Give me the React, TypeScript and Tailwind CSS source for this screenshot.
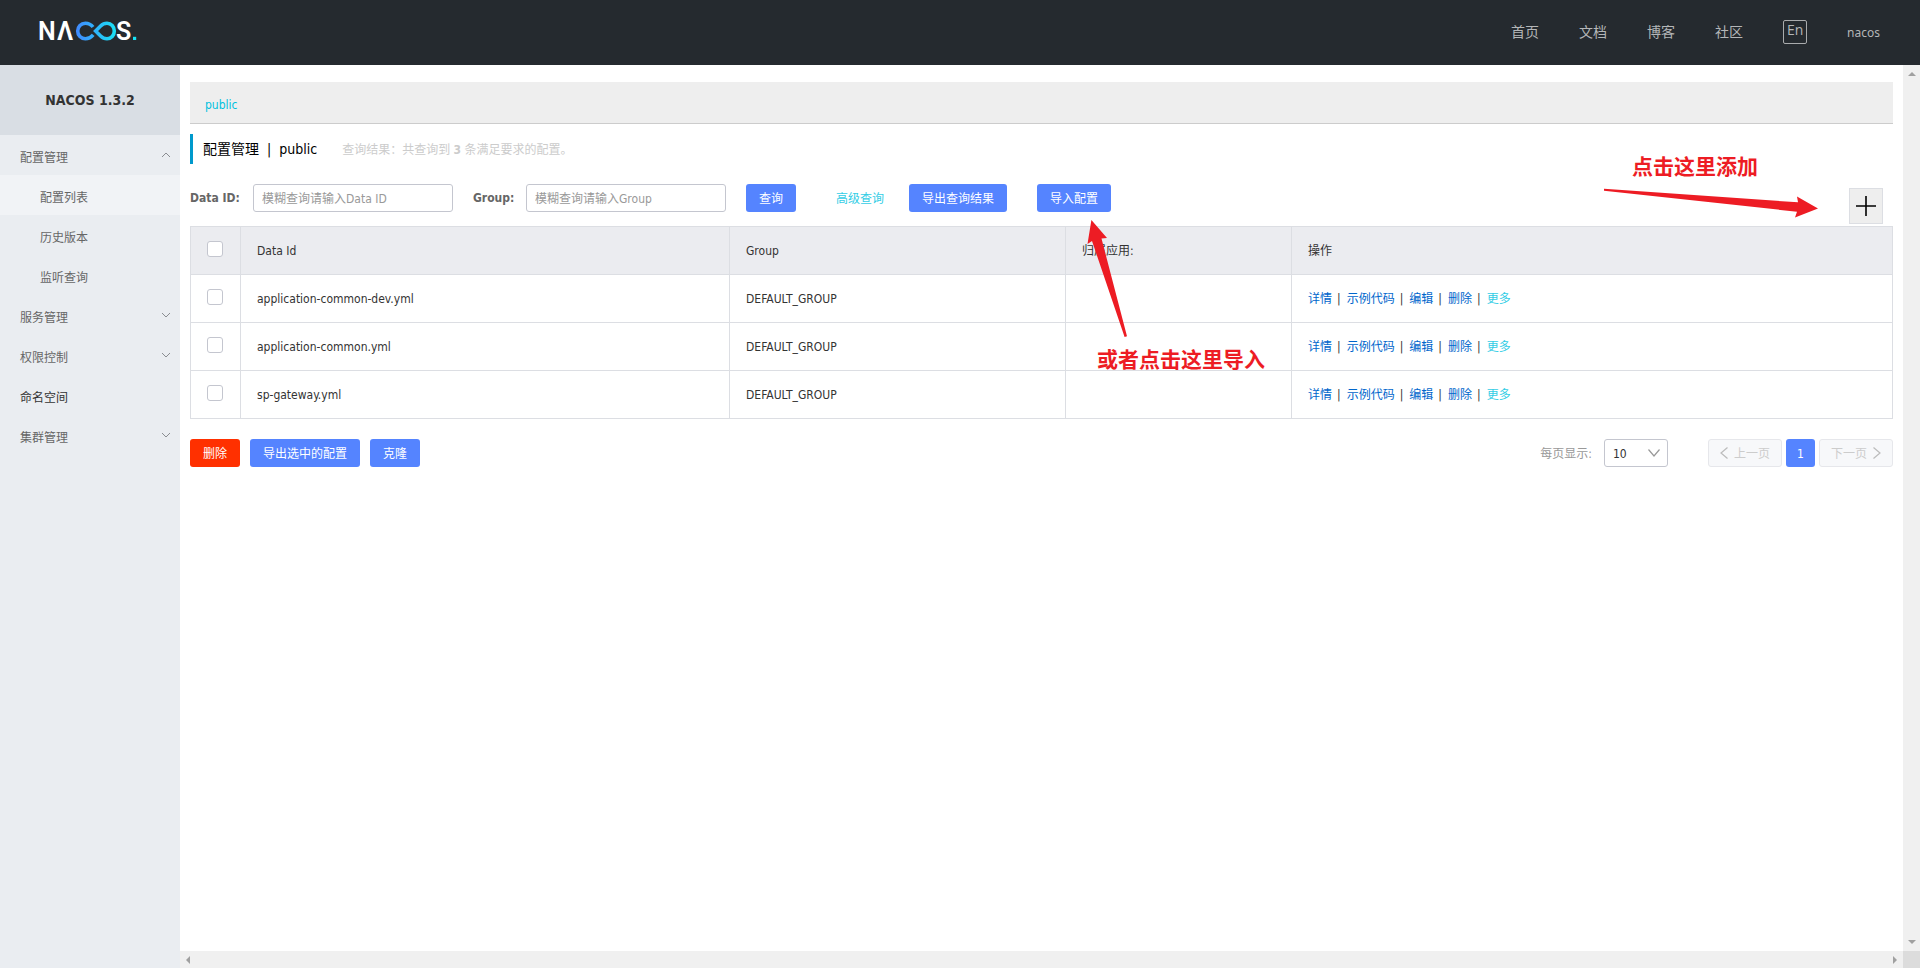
import React from "react";

const topLinks = ["首页", "文档", "博客", "社区"];

type NavItem = { label: string; kind: "group" | "child" | "link"; open?: boolean; active?: boolean };

const navItems: NavItem[] = [
  { label: "配置管理", kind: "group", open: true },
  { label: "配置列表", kind: "child", active: true },
  { label: "历史版本", kind: "child" },
  { label: "监听查询", kind: "child" },
  { label: "服务管理", kind: "group" },
  { label: "权限控制", kind: "group" },
  { label: "命名空间", kind: "link" },
  { label: "集群管理", kind: "group" },
];

const rows = ["application-common-dev.yml", "application-common.yml", "sp-gateway.yml"];

const actions = ["详情", "示例代码", "编辑", "删除", "更多"];

function Logo() {
  return (
    <svg width="108" height="40" viewBox="-4 -9 108 40" role="img" aria-label="NACOS">
      <defs>
        <linearGradient id="loop" x1="36" y1="0" x2="77" y2="0" gradientUnits="userSpaceOnUse">
          <stop offset="0" stopColor="#4289ff" />
          <stop offset="1" stopColor="#17e3f5" />
        </linearGradient>
      </defs>
      <g fill="#fff" fontFamily="Roboto, sans-serif" fontWeight="600" fontSize="25">
        <text x="-2" y="19">N</text>
        <text x="17" y="19">Λ</text>
        <text x="76" y="19">S</text>
      </g>
      <g fill="none" stroke="url(#loop)" strokeWidth="3.6" strokeLinejoin="miter">
        <path d="M53 6C51 3.4 48.4 2.2 45.4 2.2C41 2.2 37.7 5.6 37.7 10C37.7 14.4 41 17.8 45.4 17.8C48.4 17.8 50.8 16.6 53.2 13.8" />
        <path d="M55.6 10L60.6 5C62.6 3 64.4 2.2 67 2.2C71.2 2.2 74.3 5.6 74.3 10C74.3 14.4 71.2 17.8 67 17.8C64.4 17.8 62.6 17 60.6 15Z" />
      </g>
      <rect x="93" y="15.8" width="3.2" height="3.2" fill="#17e3f5" />
    </svg>
  );
}

function Chevron({ up = false }: { up?: boolean }) {
  return (
    <svg width="10" height="6" viewBox="0 0 10 6" fill="none" stroke="#8a8d91" aria-hidden="true">
      <path d={up ? "M1 5L5 1L9 5" : "M1 1L5 5L9 1"} />
    </svg>
  );
}

function Checkbox({ label }: { label: string }) {
  return (
    <input
      type="checkbox"
      aria-label={label}
      className="block size-4 appearance-none rounded-[3px] border border-[#c4c6cf] bg-white checked:bg-[#5584ff]"
    />
  );
}

function PrimaryButton({ children }: { children: React.ReactNode }) {
  return (
    <button type="button" className="h-7 rounded-[3px] bg-[#5584ff] px-[13px] pt-0.5 text-white">
      {children}
    </button>
  );
}

export default function App() {
  return (
    <div className="flex h-screen flex-col bg-white font-['DejaVu_Sans_Condensed','Noto_Sans_CJK_SC',sans-serif] text-xs text-[#333]">
      <header className="flex h-[65px] shrink-0 items-center justify-between bg-[#252a2f] pr-10 pb-0.5 pl-9">
        <a href="#" className="block">
          <Logo />
        </a>
        <nav className="flex items-center gap-10 text-sm text-[#b4b6b8]">
          {topLinks.map((t) => (
            <a key={t} href="#">
              {t}
            </a>
          ))}
          <button
            type="button"
            className="flex size-6 items-center justify-center rounded-xs border border-[#a9abad] pb-1 font-['Open_Sans',sans-serif] text-sm leading-5"
          >
            En
          </button>
          <a href="#" className="pt-0.5 font-['Noto_Sans',sans-serif] text-xs">
            nacos
          </a>
        </nav>
      </header>

      <div className="flex min-h-0 flex-1">
        <aside className="w-[180px] shrink-0 bg-[#eaedf1]">
          <h1 className="flex h-[70px] items-center justify-center bg-[#d9dee4] text-sm font-bold">NACOS 1.3.2</h1>
          <ul>
            {navItems.map((n) => (
              <li key={n.label}>
                <a
                  href="#"
                  className={`flex h-10 items-center justify-between pr-[9px] pt-1.5 ${n.kind === "child" ? "pl-10" : "pl-5"} ${
                    n.kind === "link" ? "text-[#333]" : "text-[#666]"
                  } ${n.active ? "bg-[#f1f3f6]" : ""}`}
                >
                  {n.label}
                  {n.kind === "group" && (
                    <span className="pb-1.5">
                      <Chevron up={n.open} />
                    </span>
                  )}
                </a>
              </li>
            ))}
          </ul>
        </aside>

        <div className="grid min-w-0 flex-1 grid-cols-[1fr_17px] grid-rows-[1fr_17px]">
          <main className="relative min-w-0 overflow-hidden px-2.5 pt-[17px]">
            <div className="flex h-[42px] items-center border-b border-[#ccc] bg-[#eee] px-[15px] pt-1 text-[#00c1de]">
              <a href="#">public</a>
            </div>

            <div className="mt-2.5 flex h-[30px] items-center border-l-[3px] border-[#09c] pl-2.5">
              <h2 className="flex text-sm text-black">
                <span>配置管理</span>
                <span className="mx-2">|</span>
                <span>public</span>
              </h2>
              <p className="ml-[25px] pt-0.5 text-[#ccc]">
                查询结果：共查询到 <strong>3</strong> 条满足要求的配置。
              </p>
            </div>

            <form className="mt-5 flex h-7 items-center" onSubmit={(e) => e.preventDefault()}>
              <label htmlFor="dataId" className="w-[63px] font-bold text-[#666]">
                Data ID:
              </label>
              <input
                id="dataId"
                placeholder="模糊查询请输入Data ID"
                className="h-7 w-[200px] rounded-[3px] border border-[#c4c6cf] px-2 pt-0.5 placeholder:text-[#999]"
              />
              <label htmlFor="group" className="ml-5 w-[53px] font-bold text-[#666]">
                Group:
              </label>
              <input
                id="group"
                placeholder="模糊查询请输入Group"
                className="mr-5 h-7 w-[200px] rounded-[3px] border border-[#c4c6cf] px-2 pt-0.5 placeholder:text-[#999]"
              />
              <PrimaryButton>查询</PrimaryButton>
              <a href="#" className="mr-[25px] ml-10 pt-0.5 text-[#33cde5]">
                高级查询
              </a>
              <PrimaryButton>导出查询结果</PrimaryButton>
              <span className="w-[30px]" />
              <PrimaryButton>导入配置</PrimaryButton>
              <button
                type="button"
                aria-label="新建配置"
                className="mt-4 mr-2.5 ml-auto flex h-9 w-[34px] items-center justify-center border border-[#dcdee3] bg-[#eee]"
              >
                <svg width="20" height="20" viewBox="0 0 20 20" stroke="#000" strokeWidth="1.6" aria-hidden="true">
                  <path d="M0 10H20M10 0V20" />
                </svg>
              </button>
            </form>

            <table className="mt-3.5 w-full table-fixed border-collapse text-left">
              <colgroup>
                <col className="w-[50px]" />
                <col className="w-[489px]" />
                <col className="w-[336px]" />
                <col className="w-[226px]" />
                <col />
              </colgroup>
              <thead className="bg-[#ebecf0]">
                <tr className="h-12">
                  <th className="border border-[#dcdee3] px-4 pb-1">
                    <Checkbox label="全选" />
                  </th>
                  {["Data Id", "Group", "归属应用:", "操作"].map((h) => (
                    <th key={h} className="border border-[#dcdee3] px-4 font-normal">
                      {h}
                    </th>
                  ))}
                </tr>
              </thead>
              <tbody>
                {rows.map((r) => (
                  <tr key={r} className="h-12">
                    <td className="border border-[#dcdee3] px-4 pb-1">
                      <Checkbox label={r} />
                    </td>
                    <td className="border border-[#dcdee3] px-4">{r}</td>
                    <td className="border border-[#dcdee3] px-4">DEFAULT_GROUP</td>
                    <td className="border border-[#dcdee3] px-4" />
                    <td className="border border-[#dcdee3] px-4">
                      {actions.map((a, i) => (
                        <React.Fragment key={a}>
                          {i > 0 && <span className="mr-1.5 ml-[5px]">|</span>}
                          <a href="#" className={a === "更多" ? "text-[#33cde5]" : "text-[#06c]"}>
                            {a}
                          </a>
                        </React.Fragment>
                      ))}
                    </td>
                  </tr>
                ))}
              </tbody>
            </table>

            <div className="mt-5 flex items-center justify-between">
              <div className="flex gap-2.5">
                <button type="button" className="h-7 rounded-[3px] bg-[#ff3000] px-[13px] pt-0.5 text-white">
                  删除
                </button>
                <PrimaryButton>导出选中的配置</PrimaryButton>
                <PrimaryButton>克隆</PrimaryButton>
              </div>
              <div className="flex items-center">
                <label htmlFor="pageSize" className="mr-3 pt-0.5 text-[#999]">
                  每页显示:
                </label>
                <div className="relative mr-10">
                  <select
                    id="pageSize"
                    defaultValue="10"
                    className="block h-7 w-16 appearance-none rounded-[3px] border border-[#c4c6cf] bg-white pt-0.5 pl-2"
                  >
                    <option>10</option>
                    <option>20</option>
                    <option>50</option>
                  </select>
                  <svg
                    className="pointer-events-none absolute top-2.5 right-2"
                    width="12"
                    height="8"
                    viewBox="0 0 12 8"
                    fill="none"
                    stroke="#999"
                    strokeWidth="1.2"
                    aria-hidden="true"
                  >
                    <path d="M0.5 0.5L6 7L11.5 0.5" />
                  </svg>
                </div>
                <div className="flex gap-1">
                  <button
                    type="button"
                    disabled
                    className="flex h-7 w-[74px] items-center justify-center gap-1.5 rounded-[3px] border border-[#e6e7eb] bg-[#f7f8fa] text-[#ccc]"
                  >
                    <svg width="8" height="12" viewBox="0 0 8 12" fill="none" stroke="#bbb" strokeWidth="1.2" aria-hidden="true">
                      <path d="M7.5 0.5L1 6L7.5 11.5" />
                    </svg>
                    <span className="pt-0.5">上一页</span>
                  </button>
                  <button type="button" className="h-7 w-[29px] rounded-[3px] bg-[#5584ff] pt-0.5 text-white">
                    1
                  </button>
                  <button
                    type="button"
                    disabled
                    className="flex h-7 w-[74px] items-center justify-center gap-1.5 rounded-[3px] border border-[#e6e7eb] bg-[#f7f8fa] text-[#ccc]"
                  >
                    <span className="pt-0.5">下一页</span>
                    <svg width="8" height="12" viewBox="0 0 8 12" fill="none" stroke="#bbb" strokeWidth="1.2" aria-hidden="true">
                      <path d="M0.5 0.5L7 6L0.5 11.5" />
                    </svg>
                  </button>
                </div>
              </div>
            </div>

            <p className="absolute top-[86px] right-[145px] text-[21px] leading-8 font-bold text-[#ed1c24]">点击这里添加</p>
            <svg
              className="pointer-events-none absolute top-[120px] right-[83px]"
              width="220"
              height="36"
              viewBox="0 0 220 36"
              fill="#ed1c24"
              aria-hidden="true"
            >
              <path d="M4 3.7L198 17.3L197 11.5L218 23.5L195 32.5L197 26.7L4 5.7Z" />
            </svg>
            <svg
              className="pointer-events-none absolute top-[153px] left-[905px]"
              width="46"
              height="122"
              viewBox="0 0 46 122"
              fill="#ed1c24"
              aria-hidden="true"
            >
              <path d="M6.4 2L22 20L16.5 20.5L42 118.3L39.6 119L7 23L2.5 26Z" />
            </svg>
            <p className="absolute top-[279px] left-[917px] text-[21px] leading-8 font-bold text-[#ed1c24]">或者点击这里导入</p>
          </main>

          <div className="flex flex-col items-center justify-between bg-[#f0f0f0] py-[7px]" aria-hidden="true">
            <svg width="8" height="4" viewBox="0 0 8 4" fill="#a0a0a0">
              <path d="M4 0L8 4H0Z" />
            </svg>
            <svg width="8" height="4" viewBox="0 0 8 4" fill="#a0a0a0">
              <path d="M0 0H8L4 4Z" />
            </svg>
          </div>
          <div className="flex items-center justify-between bg-[#f0f0f0] px-1.5" aria-hidden="true">
            <svg width="4" height="8" viewBox="0 0 4 8" fill="#a0a0a0">
              <path d="M4 0V8L0 4Z" />
            </svg>
            <svg width="4" height="8" viewBox="0 0 4 8" fill="#a0a0a0">
              <path d="M0 0L4 4L0 8Z" />
            </svg>
          </div>
          <div className="bg-[#dcdcdc]" aria-hidden="true" />
        </div>
      </div>
    </div>
  );
}
